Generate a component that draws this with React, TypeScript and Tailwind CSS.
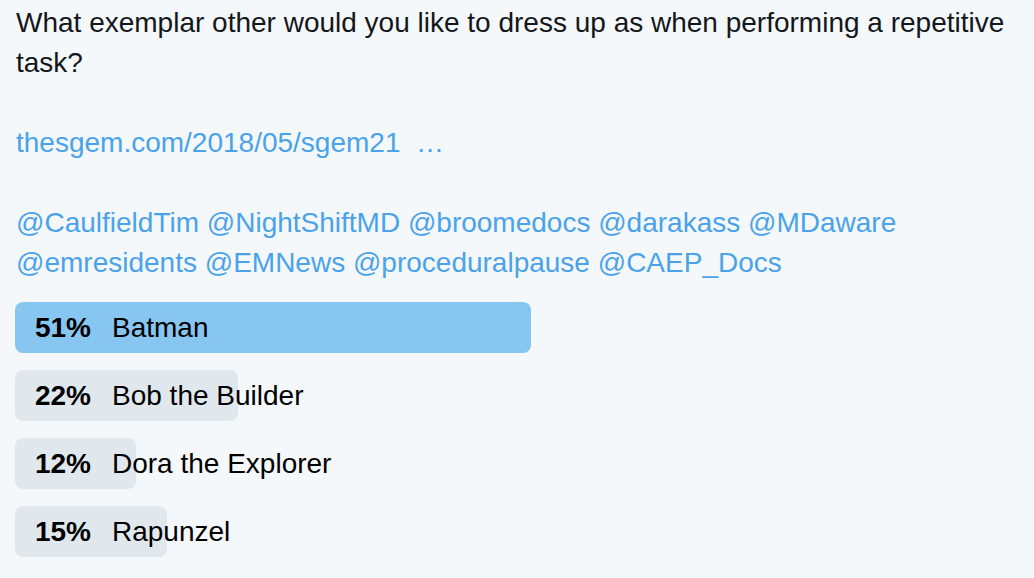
const choices = [
  { pct: 51, label: 'Batman', winner: true },
  { pct: 22, label: 'Bob the Builder' },
  { pct: 12, label: 'Dora the Explorer' },
  { pct: 15, label: 'Rapunzel' },
];

const mentions = ['@CaulfieldTim', '@NightShiftMD', '@broomedocs', '@darakass', '@MDaware', '@emresidents', '@EMNews', '@proceduralpause', '@CAEP_Docs'];

export default function App() {
  return (
    <div className="min-h-screen bg-[#f5f8fa] pl-4 pr-4 pt-[3px] font-['Liberation_Sans',Arial,sans-serif] text-[28px] leading-[40px] text-[#14171a]">
      <p>What exemplar other would you like to dress up as when performing a repetitive task?</p>
      <p className="mt-[40px] text-[#4aa3ea]">thesgem.com/2018/05/sgem21&nbsp; …</p>
      <p className="mt-[40px] text-[#4aa3ea]">{mentions.join(' ')}</p>

      {/* poll results */}
      <div className="mt-[19px] flex flex-col gap-[17px]">
        {choices.map((c) => (
          <div key={c.label} className="-ml-px">
            <div
              style={{ width: `${(c.pct * 1012) / 100}px` }}
              className={`flex h-[51px] items-center whitespace-nowrap rounded-lg ${c.winner ? 'bg-[#88c6f2]' : 'bg-[#e1e8ed]'}`}
            >
              <span className="w-[76px] shrink-0 text-right font-bold text-black">{c.pct}%</span>
              <span className="ml-[21px] text-black">{c.label}</span>
            </div>
          </div>
        ))}
      </div>
    </div>
  );
}
